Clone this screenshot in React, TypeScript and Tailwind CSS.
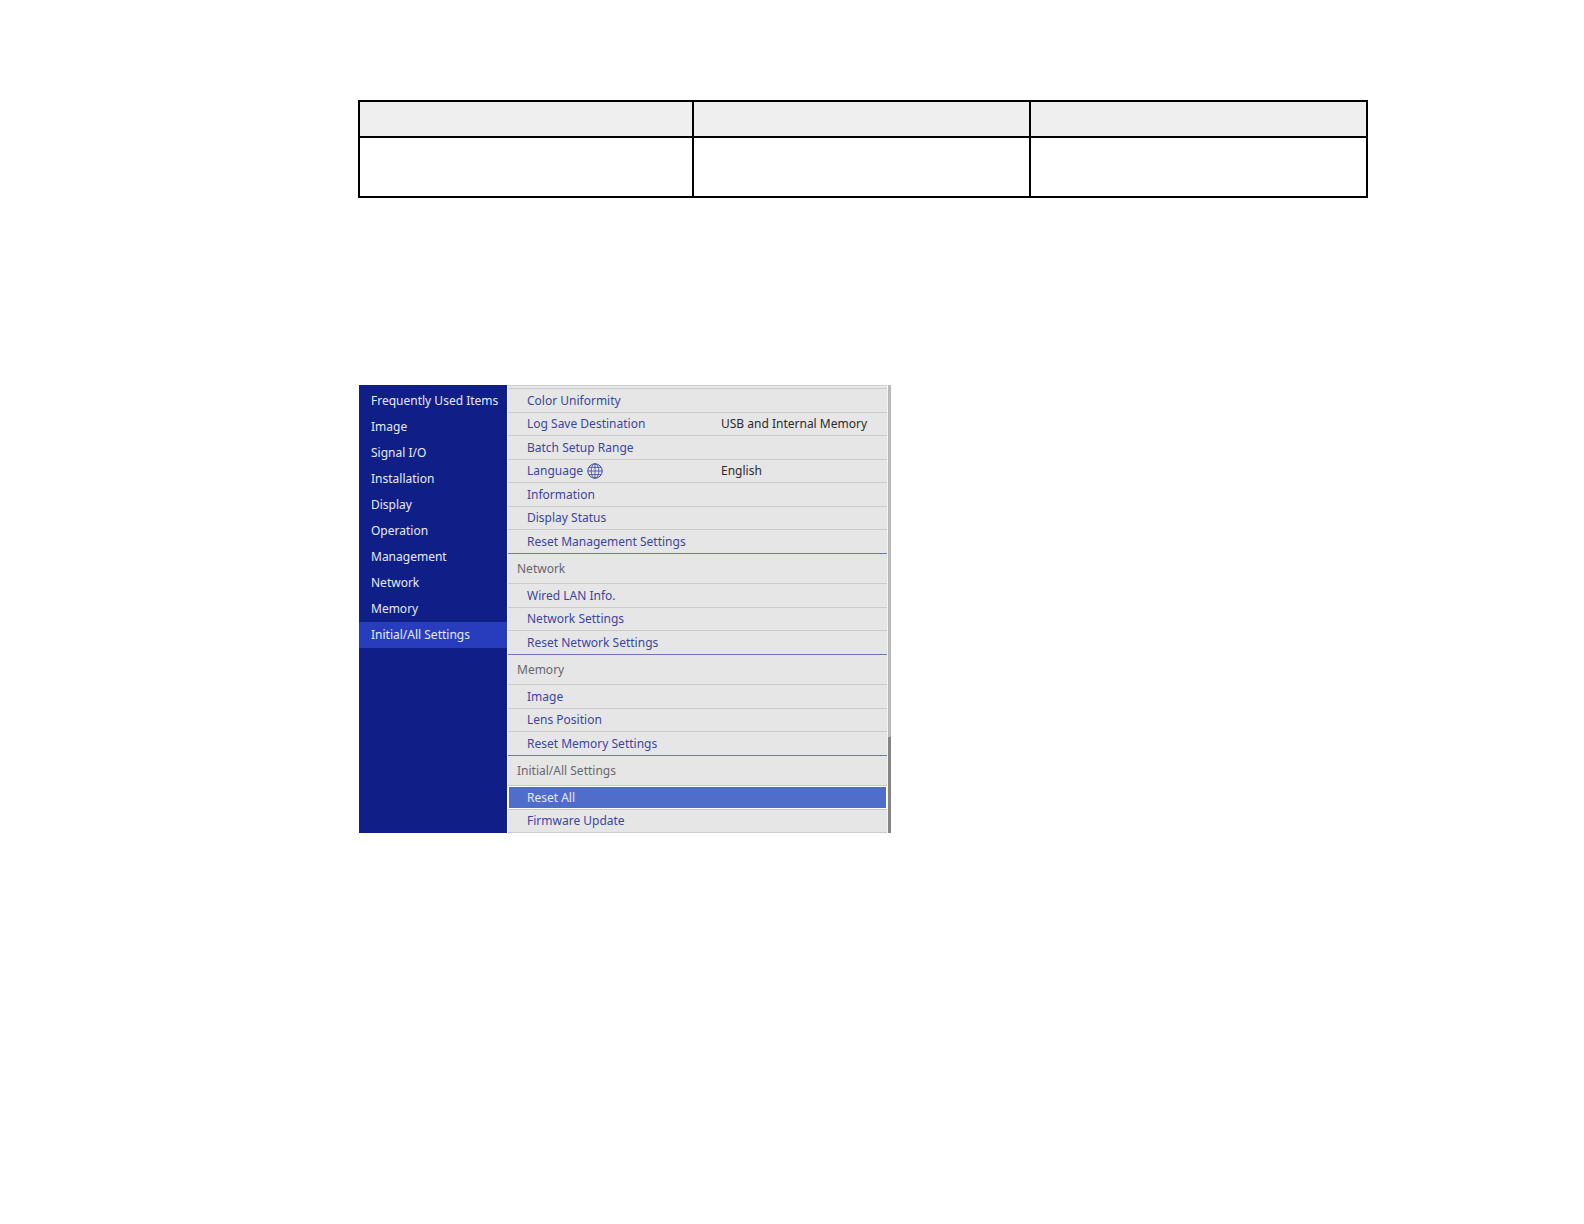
import React from "react";

type Item = { label: string; value?: string; globe?: boolean; selected?: boolean };
type Group = { title?: string; items: Item[] };

const categories = [
  "Frequently Used Items",
  "Image",
  "Signal I/O",
  "Installation",
  "Display",
  "Operation",
  "Management",
  "Network",
  "Memory",
  "Initial/All Settings",
];

const activeCategory = "Initial/All Settings";

const groups: Group[] = [
  {
    items: [
      { label: "Color Uniformity" },
      { label: "Log Save Destination", value: "USB and Internal Memory" },
      { label: "Batch Setup Range" },
      { label: "Language", value: "English", globe: true },
      { label: "Information" },
      { label: "Display Status" },
      { label: "Reset Management Settings" },
    ],
  },
  {
    title: "Network",
    items: [
      { label: "Wired LAN Info." },
      { label: "Network Settings" },
      { label: "Reset Network Settings" },
    ],
  },
  {
    title: "Memory",
    items: [
      { label: "Image" },
      { label: "Lens Position" },
      { label: "Reset Memory Settings" },
    ],
  },
  {
    title: "Initial/All Settings",
    items: [{ label: "Reset All", selected: true }, { label: "Firmware Update" }],
  },
];

function Globe() {
  return (
    <svg viewBox="0 0 16 16" className="ml-1 size-4 shrink-0" fill="none" stroke="currentColor" strokeWidth="1" aria-hidden="true">
      <circle cx="8" cy="8" r="7.2" />
      <ellipse cx="8" cy="8" rx="3.8" ry="7.2" strokeWidth="0.8" />
      <path d="M8 0.8v14.4M0.8 8h14.4M2 4.4h12M2 11.6h12" strokeWidth="0.8" />
    </svg>
  );
}

function Row({ item, closesGroup }: { item: Item; closesGroup: boolean }) {
  return (
    <li
      className={
        closesGroup
          ? "h-[23px] border-b border-[#7078b4] odd:h-6"
          : "h-[23px] border-b border-[#cbcbcd] odd:h-6"
      }
    >
      <button
        type="button"
        className={
          item.selected
            ? "flex h-full w-full items-center border border-white bg-[#4f6dca] pl-[18px] text-left text-[#e4eafb]"
            : "flex h-full w-full items-center pl-[19px] text-left text-[#3b469c]"
        }
      >
        <span className="flex w-[194px] items-center whitespace-nowrap">
          {item.label}
          {item.globe && <Globe />}
        </span>
        {item.value && <span className="whitespace-nowrap text-[#2b2b2d]">{item.value}</span>}
      </button>
    </li>
  );
}

function SettingsTable() {
  const columns = [0, 1, 2];
  return (
    <table className="w-full table-fixed border-collapse border-2 border-black">
      <colgroup>
        <col className="w-[33.1%]" />
        <col />
        <col />
      </colgroup>
      <thead>
        <tr className="h-9 bg-[#efefef]">
          {columns.map((c) => (
            <th key={c} className="border-2 border-black" />
          ))}
        </tr>
      </thead>
      <tbody>
        <tr className="h-15">
          {columns.map((c) => (
            <td key={c} className="border-2 border-black" />
          ))}
        </tr>
      </tbody>
    </table>
  );
}

export default function App() {
  return (
    <main className="min-h-screen bg-white pt-[100px] pr-[216px] pl-[358px] font-['Noto_Sans',sans-serif] text-xs">
      <SettingsTable />

      <section className="mt-[187px] ml-px flex max-w-[532px]">
        <nav className="w-[148px] shrink-0 bg-[#101e87] pt-[3px] text-[#e6eaf8]">
          {categories.map((name) => (
            <button
              key={name}
              type="button"
              className={
                name === activeCategory
                  ? "flex h-[26px] w-full items-center bg-[#273dbd] pl-3 text-left whitespace-nowrap"
                  : "flex h-[26px] w-full items-center pl-3 text-left whitespace-nowrap"
              }
            >
              {name}
            </button>
          ))}
        </nav>

        <div className="min-w-0 flex-1 border-t border-l border-t-[#cfcfcf] border-l-white bg-[#e6e6e6] pt-0.5">
          <div className="h-px bg-[#cbcbcd]" />
          {groups.map((group, i) => (
            <section key={i}>
              {group.title && (
                <h2 className="flex h-[30px] items-center border-b border-[#cbcbcd] pl-[9px] text-[#66676c]">
                  {group.title}
                </h2>
              )}
              <ul>
                {group.items.map((item, n) => (
                  <Row
                    key={item.label}
                    item={item}
                    closesGroup={n === group.items.length - 1 && i < groups.length - 1}
                  />
                ))}
              </ul>
            </section>
          ))}
        </div>

        <div className="flex w-1 flex-col border-l border-[#f4f4f4]">
          <div className="flex-[350] bg-[#b9b9b9]" />
          <div className="flex-[96] bg-[#858585]" />
        </div>
      </section>
    </main>
  );
}
